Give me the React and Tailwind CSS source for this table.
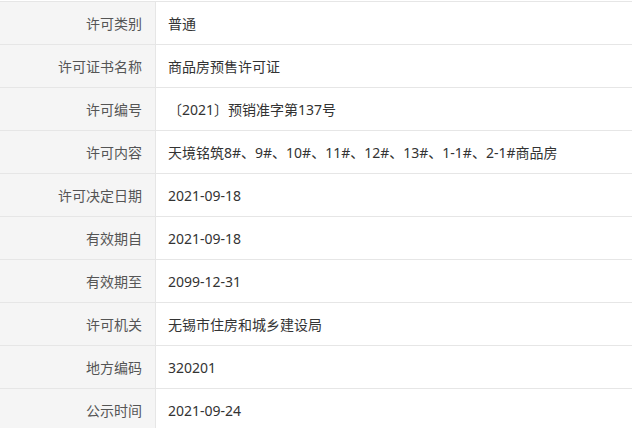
import React from "react";

const rows = [
  ["许可类别", "普通"],
  ["许可证书名称", "商品房预售许可证"],
  ["许可编号", "〔2021〕预销准字第137号"],
  ["许可内容", "天境铭筑8#、9#、10#、11#、12#、13#、1-1#、2-1#商品房"],
  ["许可决定日期", "2021-09-18"],
  ["有效期自", "2021-09-18"],
  ["有效期至", "2099-12-31"],
  ["许可机关", "无锡市住房和城乡建设局"],
  ["地方编码", "320201"],
  ["公示时间", "2021-09-24"],
];

export default function App() {
  return (
    <div
      className="w-[632px] h-[428px] overflow-hidden bg-white pt-px"
      style={{ fontFamily: '"Noto Sans", "Noto Sans CJK SC", sans-serif' }}
    >
      <div className="border-t border-[#e6e6e6]">
        {rows.map(([k, v]) => (
          <div key={k} className="flex h-[43px] border-b border-[#e6e6e6] text-[14px]">
            <div className="w-[156px] shrink-0 bg-[#f5f5f5] border-r border-[#e6e6e6] flex items-center justify-end pr-[13px] text-[#555]">
              {k}
            </div>
            <div className="flex-1 flex items-center pl-[12px] text-[#333]">{v}</div>
          </div>
        ))}
      </div>
    </div>
  );
}
